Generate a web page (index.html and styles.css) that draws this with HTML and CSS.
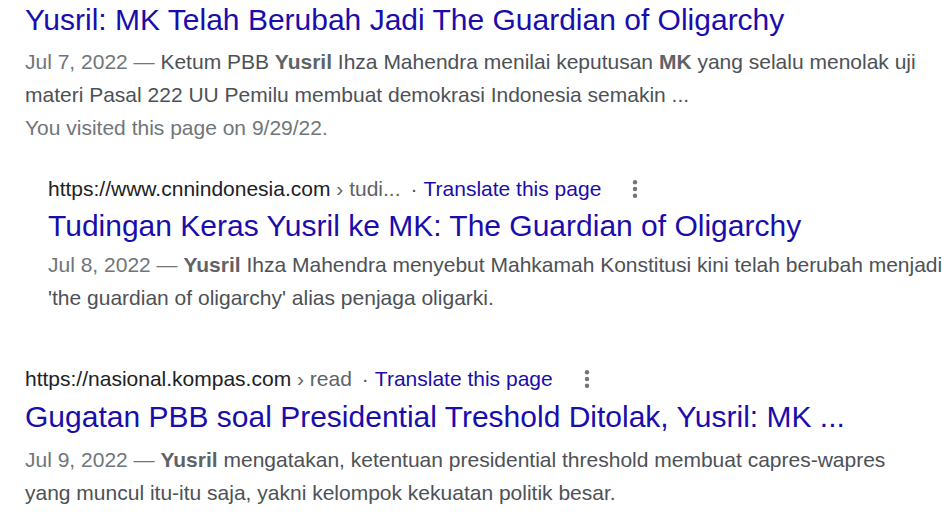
FILE: index.html
```html
<!DOCTYPE html>
<html>
<head>
<meta charset="utf-8">
<link rel="stylesheet" href="styles.css">
</head>
<body>
<div class="results">
  <div class="result">
    <a class="title" href="#">Yusril: MK Telah Berubah Jadi The Guardian of Oligarchy</a>
    <div class="snippet first"><span class="date">Jul 7, 2022 —</span> Ketum PBB <b>Yusril</b> Ihza Mahendra menilai keputusan <b>MK</b> yang selalu menolak uji materi Pasal 222 UU Pemilu membuat demokrasi Indonesia semakin ...</div>
    <div class="visited">You visited this page on 9/29/22.</div>
  </div>

  <div class="result sub">
    <div class="urlrow">
      <span class="url">https://www.cnnindonesia.com<span class="crumb"> › tudi...</span></span>
      <span class="sep">·</span>
      <a class="translate" href="#">Translate this page</a>
      <span class="more"><svg width="6" height="20" viewBox="0 0 6 20"><circle cx="3" cy="3.3" r="2.2"/><circle cx="3" cy="10" r="2.2"/><circle cx="3" cy="16.7" r="2.2"/></svg></span>
    </div>
    <a class="title" href="#">Tudingan Keras Yusril ke MK: The Guardian of Oligarchy</a>
    <div class="snippet"><span class="date">Jul 8, 2022 —</span> <b>Yusril</b> Ihza Mahendra menyebut Mahkamah Konstitusi kini telah berubah menjadi 'the guardian of oligarchy' alias penjaga oligarki.</div>
  </div>

  <div class="result third">
    <div class="urlrow">
      <span class="url">https://nasional.kompas.com<span class="crumb"> › read</span></span>
      <span class="sep">·</span>
      <a class="translate" href="#">Translate this page</a>
      <span class="more"><svg width="6" height="20" viewBox="0 0 6 20"><circle cx="3" cy="3.3" r="2.2"/><circle cx="3" cy="10" r="2.2"/><circle cx="3" cy="16.7" r="2.2"/></svg></span>
    </div>
    <a class="title" href="#">Gugatan PBB soal Presidential Treshold Ditolak, Yusril: MK ...</a>
    <div class="snippet"><span class="date">Jul 9, 2022 —</span> <b>Yusril</b> mengatakan, ketentuan presidential threshold membuat capres-wapres yang muncul itu-itu saja, yakni kelompok kekuatan politik besar.</div>
  </div>
</div>
</body>
</html>
```
FILE: styles.css
```css
html, body {
  margin: 0;
  padding: 0;
  background: #fff;
}
body {
  font-family: "Liberation Sans", Arial, sans-serif;
  overflow: hidden;
}
.results {
  padding-left: 25px;
  width: 920px;
}
.result {
  display: flex;
  flex-direction: column;
}
.title {
  display: block;
  font-size: 30px;
  line-height: 39px;
  color: #1a0dab;
  text-decoration: none;
  white-space: nowrap;
}
.snippet {
  font-size: 21px;
  line-height: 33px;
  color: #4d5156;
  max-width: 896px;
}
.snippet.first {
  margin-top: 6px;
}
.snippet b {
  font-weight: bold;
  color: #5f6368;
}
.date {
  color: #70757a;
}
.visited {
  font-size: 21px;
  line-height: 33px;
  color: #70757a;
}
.sub {
  padding-left: 23px;
  margin-top: 28px;
}
.sub .title {
  margin-top: 1px;
}
.sub .snippet {
  margin-top: 3px;
}
.third {
  margin-top: 48px;
}
.third .title {
  margin-top: 2px;
}
.third .snippet {
  margin-top: 7px;
}
.urlrow {
  display: flex;
  align-items: center;
  font-size: 21px;
  line-height: 33px;
  white-space: nowrap;
}
.url {
  color: #202124;
}
.crumb {
  color: #5f6368;
}
.sep {
  color: #4d5156;
  margin: 0 6px 0 10px;
}
.translate {
  color: #1a0dab;
  text-decoration: none;
}
.more {
  display: flex;
  margin-left: 31px;
  fill: #70757a;
}
```
